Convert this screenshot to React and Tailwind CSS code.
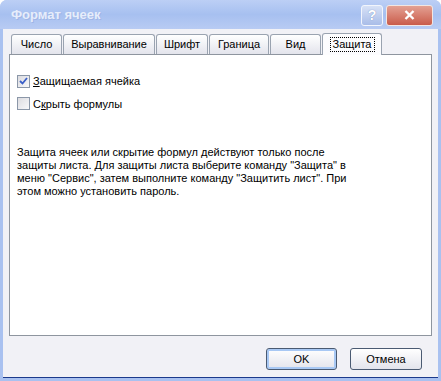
import React from "react";

const tabs = [
  { label: "Число", w: "w-[51px]" },
  { label: "Выравнивание", w: "w-[92px]" },
  { label: "Шрифт", w: "w-[52px]" },
  { label: "Граница", w: "w-[60px]" },
  { label: "Вид", w: "w-[51px]" },
];

const Checkbox = ({ checked }) => (
  <span className="w-[13px] h-[13px] border border-[#8b97a8] bg-gradient-to-br from-[#dcdce0] to-[#f8f8fa] flex items-center justify-center">
    {checked && (
      <svg width="9" height="9" viewBox="0 0 9 9">
        <path d="M1 4 L3.5 6.5 L8 1" stroke="#3a5fc8" strokeWidth="1.8" fill="none" />
      </svg>
    )}
  </span>
);

const App = () => {
  return (
    <div
      className="w-[441px] h-[381px] flex flex-col rounded-t-[7px] overflow-hidden bg-[#a9c1f0] text-[11px] text-black"
      style={{ fontFamily: '"Liberation Sans", Arial, sans-serif' }}
    >
      {/* title bar */}
      <div className="h-[29px] flex items-center pl-[11px] pr-[8px] bg-gradient-to-b from-[#bccff5] via-[#a7c0f0] to-[#b8cbf3]">
        <span className="flex-1 text-[13px] font-bold text-[#e6edfb] [text-shadow:1px_1px_0_#9fb5e6]">
          Формат ячеек
        </span>
        <div className="flex gap-[3px] mt-[1px]">
          <span className="w-[22px] h-[21px] rounded-[3px] border border-[#f2f5fc] bg-gradient-to-b from-[#d7e1f6] to-[#a9bde8] flex items-center justify-center text-[#ffffff] font-bold text-[14px] [text-shadow:0_0_1px_#6a7fb0]">
            ?
          </span>
          <span className="w-[47px] h-[21px] rounded-[3px] border border-[#f2e6e2] bg-gradient-to-b from-[#e3a093] to-[#c95b4a] flex items-center justify-center">
            <svg width="11" height="10" viewBox="0 0 11 10">
              <path d="M1.5 1 L9.5 9 M9.5 1 L1.5 9" stroke="#ffffff" strokeWidth="2.4" />
            </svg>
          </span>
        </div>
      </div>

      {/* body */}
      <div className="flex-1 flex flex-col bg-[#f1f1f6] mx-[3px] mb-[3px] border-b border-[#1b3a8c] px-[6px] pt-[3px]">
        <div className="flex items-end gap-[1px] pl-[2px] h-[22px]">
          {tabs.map((t) => (
            <div
              key={t.label}
              className={`${t.w} h-[20px] border border-b-0 border-[#9aa3b0] rounded-t-[3px] bg-gradient-to-b from-[#ffffff] to-[#e3e4ec] flex items-center justify-center`}
            >
              {t.label}
            </div>
          ))}
          <div className="w-[60px] h-[22px] -mb-px relative z-10 border border-b-0 border-[#9aa3b0] rounded-t-[3px] bg-[#fcfcfe] flex items-center justify-center">
            <span className="px-[2px] leading-[13px] border border-dotted border-black">Защита</span>
          </div>
        </div>
        <div className="h-[282px] bg-white border border-[#8e959f] flex flex-col pl-[7px] pt-[18px] pr-[8px]">
          <div className="flex flex-col gap-[6px]">
            <label className="flex items-center gap-[3px]">
              <Checkbox checked />
              <span>
                <span className="underline">З</span>ащищаемая ячейка
              </span>
            </label>
            <label className="flex items-center gap-[3px]">
              <Checkbox />
              <span>
                С<span className="underline">к</span>рыть формулы
              </span>
            </label>
          </div>
          <p className="mt-[34px] leading-[13px]">
            Защита ячеек или скрытие формул действуют только после
            <br />
            защиты листа. Для защиты листа выберите команду "Защита" в
            <br />
            меню "Сервис", затем выполните команду "Защитить лист". При
            <br />
            этом можно установить пароль.
          </p>
        </div>
        <div className="flex justify-end gap-[13px] pr-[10px] mt-[12px]">
          <button className="w-[71px] h-[22px] rounded-[3px] border border-[#4a5a72] bg-gradient-to-b from-[#ffffff] to-[#e3e4ec] shadow-[inset_0_0_0_2px_#a8c8f4]">
            OK
          </button>
          <button className="w-[72px] h-[22px] rounded-[3px] border border-[#4a5a72] bg-gradient-to-b from-[#ffffff] to-[#e3e4ec]">
            Отмена
          </button>
        </div>
      </div>
    </div>
  );
};

export default App;
